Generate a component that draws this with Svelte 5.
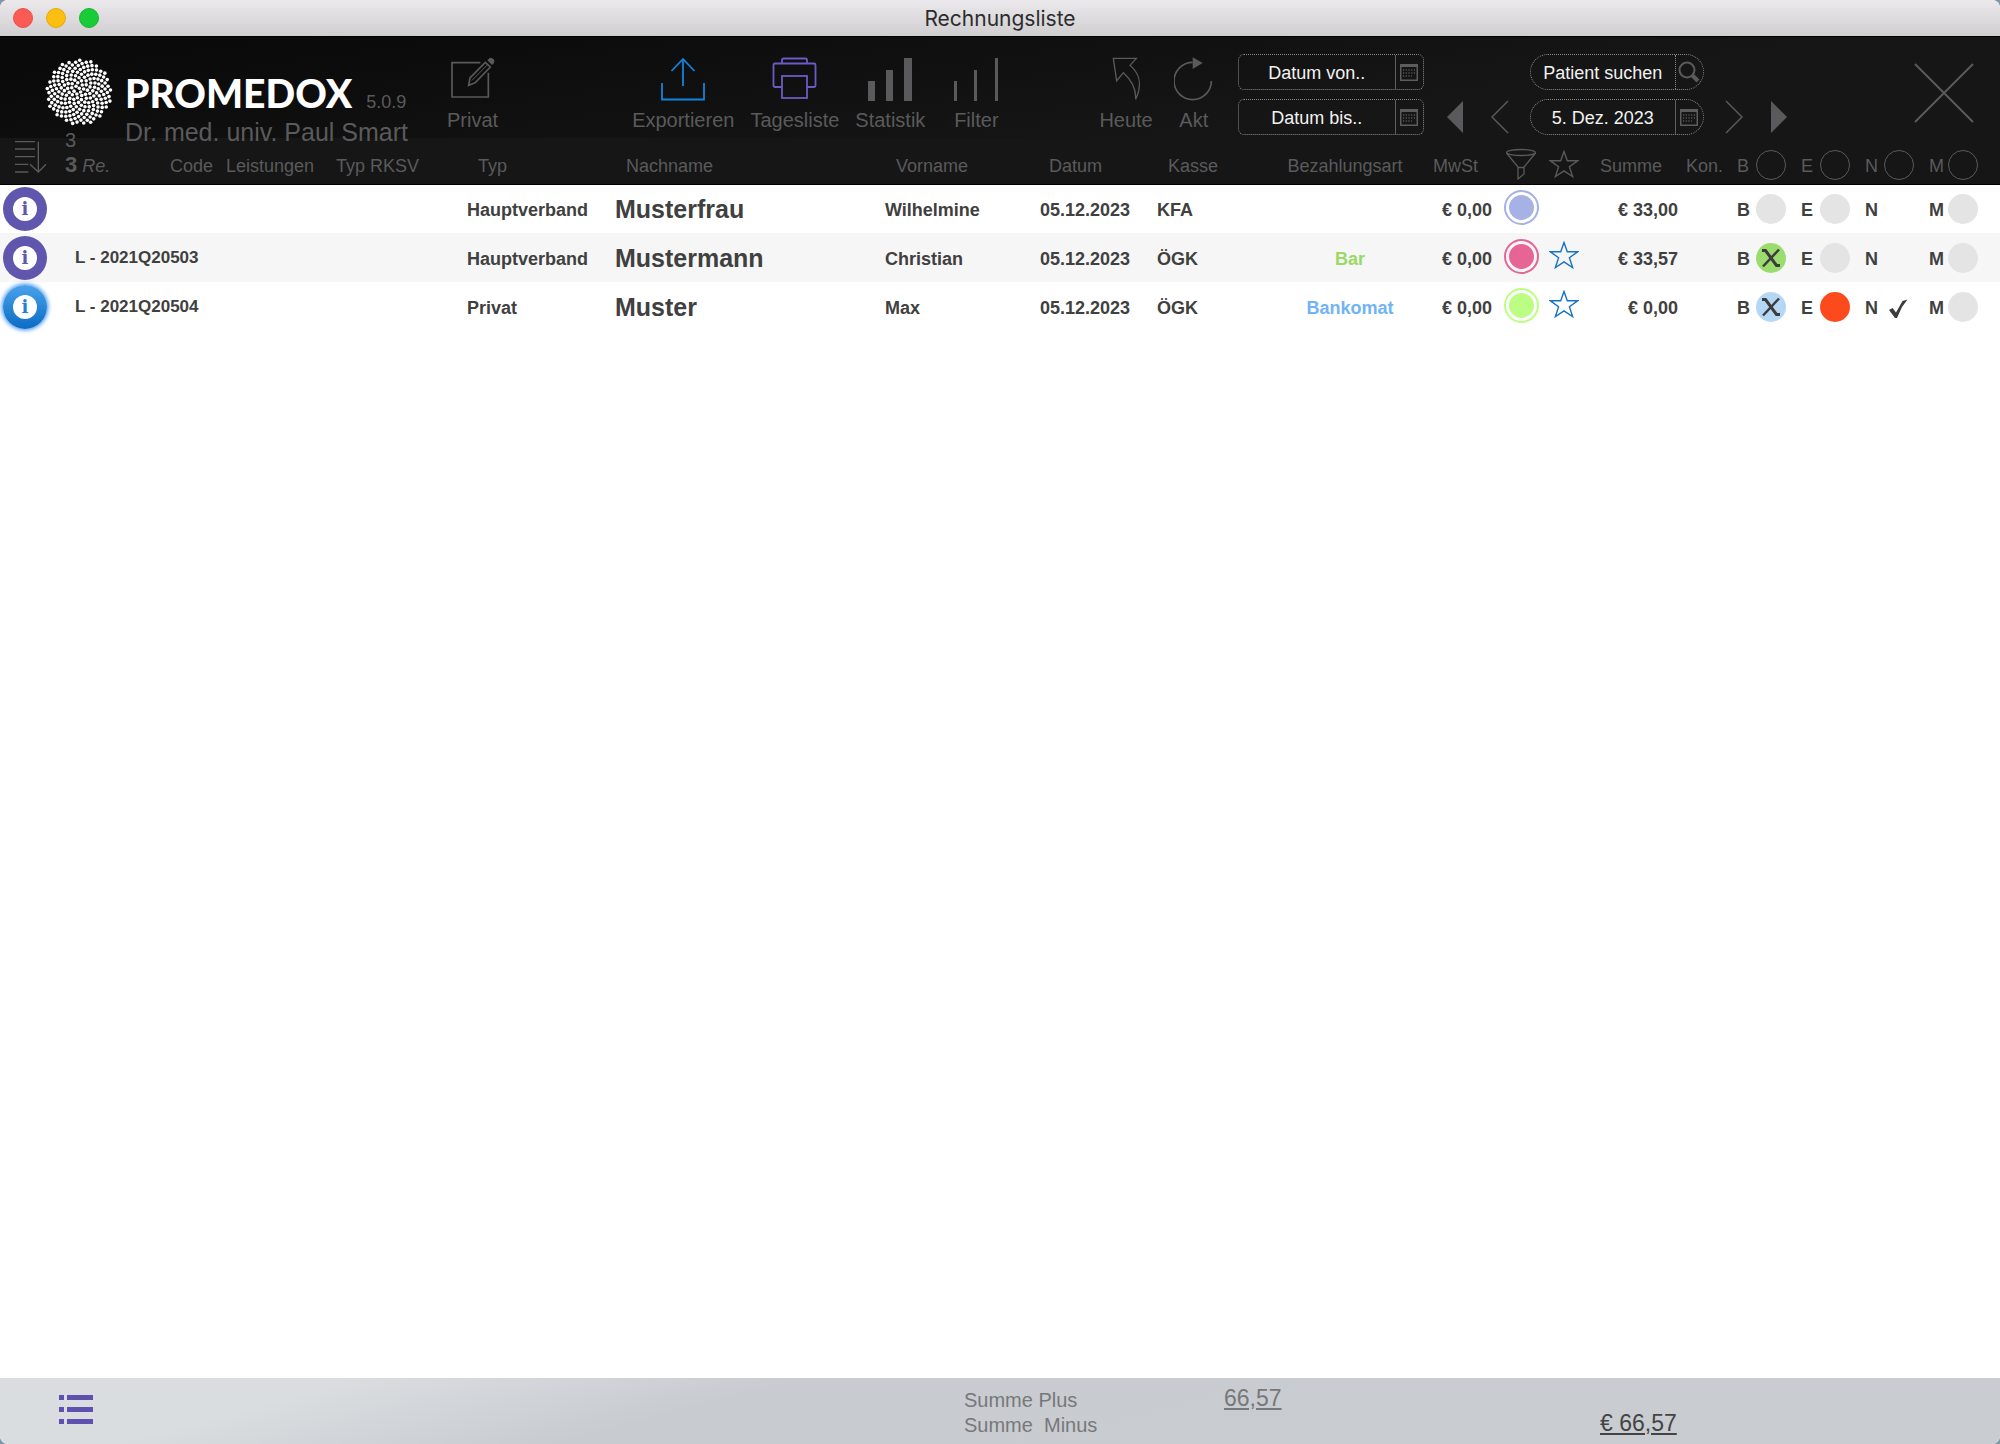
<script>
  let search = $state('');
  let dateFrom = $state('');
  let dateTo = $state('');
  let day = $state('5. Dez. 2023');

  // sunflower pattern for the logo
  const dots = Array.from({ length: 190 }, (_, i) => {
    const r = 2.36 * Math.sqrt(i + 0.5);
    const a = i * 2.39996;
    return { x: 34 + r * Math.cos(a), y: 34 + r * Math.sin(a) };
  });

  const flagNames = ['B', 'E', 'N', 'M'];

  let rows = $state([
    {
      nr: '', typ: 'Hauptverband', last: 'Musterfrau', first: 'Wilhelmine', date: '05.12.2023', kasse: 'KFA',
      pay: '', payClass: '', mwst: '€ 0,00', ring: 'blue', star: false, sum: '€ 33,00', active: false,
      flags: [{ color: 'grey' }, { color: 'grey' }, { color: 'none' }, { color: 'grey' }],
    },
    {
      nr: 'L - 2021Q20503', typ: 'Hauptverband', last: 'Mustermann', first: 'Christian', date: '05.12.2023', kasse: 'ÖGK',
      pay: 'Bar', payClass: 'bar', mwst: '€ 0,00', ring: 'pink', star: true, sum: '€ 33,57', active: false,
      flags: [{ color: 'green', mark: 'x' }, { color: 'grey' }, { color: 'none' }, { color: 'grey' }],
    },
    {
      nr: 'L - 2021Q20504', typ: 'Privat', last: 'Muster', first: 'Max', date: '05.12.2023', kasse: 'ÖGK',
      pay: 'Bankomat', payClass: 'bankomat', mwst: '€ 0,00', ring: 'lime', star: true, sum: '€ 0,00', active: true,
      flags: [{ color: 'sky', mark: 'x' }, { color: 'red' }, { color: 'none', mark: 'check' }, { color: 'grey' }],
    },
  ]);

  function select(row) {
    rows.forEach((r) => (r.active = false));
    row.active = true;
  }
</script>

{#snippet calendar()}
  <svg width="18" height="17" viewBox="0 0 18 17">
    <rect x="0.75" y="0.75" width="16.5" height="15.5" fill="none" stroke="#5c5c5e" stroke-width="1.5" />
    <rect x="0" y="0" width="18" height="3" fill="#5c5c5e" />
    <path d="M3 6H15M3 9H15M3 12H12" stroke="#77777a" stroke-width="1.2" stroke-dasharray="1.2 1.500" />
  </svg>
{/snippet}

{#snippet starIcon()}
  <svg width="30" height="30" viewBox="0 0 30 30" fill="none" stroke="currentColor" stroke-width="1.4">
    <path d="M15 1.5L18.3 10.8H28.6L20.4 16.8L23.6 26.6L15 20.8L6.4 26.6L9.6 16.8L1.4 10.8H11.7Z" />
  </svg>
{/snippet}

<div class="window">
  <div class="titlebar">
    <div class="lights">
      <button class="light close-light" aria-label="Schließen"></button>
      <button class="light min-light" aria-label="Minimieren"></button>
      <button class="light max-light" aria-label="Vergrößern"></button>
    </div>
    <h1>Rechnungsliste</h1>
  </div>

  <main>
    <header class="toolbar">
      <div class="brand">
        <div class="logo">
          <svg width="68" height="68" viewBox="0 0 68 68">
            {#each dots as d}
              <circle cx={d.x} cy={d.y} r="1.8" fill="#fff" />
            {/each}
          </svg>
          <span class="count">3</span>
        </div>
        <div class="brand-text">
          <div class="wordmark"><strong>PROMEDOX</strong><span class="version">5.0.9</span></div>
          <div class="doctor">Dr. med. univ. Paul Smart</div>
        </div>
      </div>

      <button class="tool">
        <svg width="46" height="45" viewBox="1353 168 138 135" fill="none" stroke="#5a5a5c" stroke-width="5">
          <path d="M1444 188H1359V291H1468V218" />
          <path d="M1409 256L1413 234L1459 187L1474 201L1429 248Z" />
          <path d="M1419 241L1466 194" stroke-width="3" />
          <path d="M1465 181L1472 174Q1478 172 1484 178Q1489 185 1485 189L1479 195Z" fill="#5a5a5c" stroke="none" />
        </svg>
        <span>Privat</span>
      </button>

      <div class="tools tools-main">
        <button class="tool">
          <svg width="44" height="45" viewBox="0 0 44 45" fill="none" stroke="#1283dc" stroke-width="1.8">
            <path d="M1 27V43.5H43V27M22 30V3M10.5 15L22 3L33.5 15" />
          </svg>
          <span>Exportieren</span>
        </button>
        <button class="tool">
          <svg width="45" height="45" viewBox="0 0 45 45" fill="none" stroke="#6a5cc4" stroke-width="1.8">
            <path d="M10 31H3Q1.5 31 1.5 29.5V9Q1.5 7.500 3 7.500H42Q43.500 7.500 43.500 9V29.500Q43.500 31 42 31H35" />
            <rect x="10" y="20" width="25" height="22" />
            <path d="M10 7.500V4Q10 2.500 11.500 2.500H33.500Q35 2.500 35 4V7.500" />
          </svg>
          <span>Tagesliste</span>
        </button>
        <button class="tool">
          <svg width="44" height="45" viewBox="0 0 44 45" fill="#5a5a5c">
            <path d="M0 25H7V45H0ZM18 14H25V45H18ZM36 2H44V45H36Z" />
          </svg>
          <span>Statistik</span>
        </button>
        <button class="tool filter">
          <svg width="44" height="45" viewBox="0 0 44 45" fill="#5a5a5c">
            <path d="M0 25H3V45H0ZM20 14H23V45H20ZM41 2H44V45H41Z" />
          </svg>
          <span>Filter</span>
        </button>
      </div>

      <div class="tools tools-nav">
        <button class="tool">
          <svg width="31" height="45" viewBox="150 168 93 135" fill="none" stroke="#5a5a5c" stroke-width="4">
            <path d="M157 175H226L207 196C235 220 246 250 224 298C226 262 206 235 187 218L167 243Z" />
          </svg>
          <span>Heute</span>
        </button>
        <button class="tool akt">
          <svg width="40" height="45" viewBox="334 168 120 135" fill="none" stroke="#5a5a5c" stroke-width="5">
            <path d="M446 243A56 56 0 1 1 390 187" />
            <path d="M390 172L420 189L390 207Z" fill="#5a5a5c" stroke="none" />
          </svg>
          <span>Akt</span>
        </button>
      </div>

      <div class="range">
        <div class="field">
          <input type="text" aria-label="Datum von" placeholder="Datum von.." bind:value={dateFrom} />
          <button class="field-btn" aria-label="Kalender öffnen">{@render calendar()}</button>
        </div>
        <div class="field">
          <input type="text" aria-label="Datum bis" placeholder="Datum bis.." bind:value={dateTo} />
          <button class="field-btn" aria-label="Kalender öffnen">{@render calendar()}</button>
        </div>
      </div>

      <div class="day-nav">
        <div class="steps">
          <button class="step" aria-label="Monat zurück">
            <svg width="18" height="34" viewBox="0 0 18 34"><path d="M17 1V33L1 17Z" fill="#5a5a5c" /></svg>
          </button>
          <button class="step" aria-label="Tag zurück">
            <svg width="18" height="34" viewBox="0 0 18 34"><path d="M17 1L1 17L17 33" fill="none" stroke="#5a5a5c" stroke-width="1.5" /></svg>
          </button>
        </div>
        <div class="pills">
          <div class="field pill">
            <input type="text" aria-label="Patient suchen" placeholder="Patient suchen" bind:value={search} />
            <button class="field-btn dotted" aria-label="Suchen">
              <svg width="22" height="22" viewBox="0 0 22 22" fill="none" stroke="#5a5a5c">
                <circle cx="9" cy="9" r="7.5" stroke-width="2" />
                <path d="M14 14L20 20" stroke-width="4" />
              </svg>
            </button>
          </div>
          <div class="field pill">
            <input type="text" aria-label="Tag" bind:value={day} />
            <button class="field-btn" aria-label="Kalender öffnen">{@render calendar()}</button>
          </div>
        </div>
        <div class="steps">
          <button class="step" aria-label="Tag vor">
            <svg width="18" height="34" viewBox="0 0 18 34"><path d="M1 1L17 17L1 33" fill="none" stroke="#5a5a5c" stroke-width="1.5" /></svg>
          </button>
          <button class="step" aria-label="Monat vor">
            <svg width="18" height="34" viewBox="0 0 18 34"><path d="M1 1V33L17 17Z" fill="#5a5a5c" /></svg>
          </button>
        </div>
      </div>

      <button class="close" aria-label="Liste schließen">
        <svg width="60" height="60" viewBox="0 0 60 60"><path d="M1 1L59 59M59 1L1 59" stroke="#5a5a5c" stroke-width="2" /></svg>
      </button>
    </header>

    <table>
      <colgroup>
        <col class="w-info" />
        <col class="w-count" />
        <col class="w-code" />
        <col class="w-leist" />
        <col class="w-rksv" />
        <col class="w-typ" />
        <col />
        <col class="w-first" />
        <col class="w-date" />
        <col class="w-kasse" />
        <col class="w-pay" />
        <col class="w-mwst" />
        <col class="w-ring" />
        <col class="w-star" />
        <col class="w-sum" />
        <col class="w-kon" />
        <col class="w-flag" />
        <col class="w-flag" />
        <col class="w-flag" />
        <col class="w-last" />
      </colgroup>
      <thead>
        <tr>
          <th class="icon-head sort">
            <button class="plain" aria-label="Sortieren">
              <svg width="33" height="34" viewBox="42 416 99 102" fill="none" stroke="#5a5a5c" stroke-width="4">
                <path d="M45 421H105M45 443H105M45 466H105M45 489H85M45 512H85M115 421V511M90 489L115 512L138 489" />
              </svg>
            </button>
          </th>
          <th class="total"><b>3</b> <i>Re.</i></th>
          <th>Code</th>
          <th>Leistungen</th>
          <th>Typ RKSV</th>
          <th class="indent">Typ</th>
          <th class="indent">Nachname</th>
          <th class="indent">Vorname</th>
          <th class="date">Datum</th>
          <th class="indent">Kasse</th>
          <th class="center pay">Bezahlungsart</th>
          <th class="mwst">MwSt</th>
          <th class="icon-head center">
            <button class="plain" aria-label="Markierung filtern">
              <svg width="32" height="32" viewBox="0 0 32 32" fill="none" stroke="#5a5a5c" stroke-width="1.3">
                <ellipse cx="16" cy="4.500" rx="14.500" ry="3" />
                <path d="M1.500 5L13 19V31L19 26V19L30.500 5M13 19.500H19" />
              </svg>
            </button>
          </th>
          <th class="icon-head center">
            <button class="plain" aria-label="Favoriten filtern">{@render starIcon()}</button>
          </th>
          <th class="sum">Summe</th>
          <th class="kon">Kon.</th>
          {#each flagNames as name}
            <th class="icon-head flag-cell">
              <label class="flag"><span>{name}</span><input type="checkbox" class="outline" /></label>
            </th>
          {/each}
        </tr>
      </thead>
      <tbody>
        {#each rows as row}
          <tr>
            <td class="info-cell">
              <button class="info" class:active={row.active} aria-label="Info" onclick={() => select(row)}><span>i</span></button>
            </td>
            <td class="nr" colspan="4">{row.nr}</td>
            <td class="text">{row.typ}</td>
            <td class="name">{row.last}</td>
            <td class="text">{row.first}</td>
            <td class="text">{row.date}</td>
            <td class="text">{row.kasse}</td>
            <td class="text center pay {row.payClass}">{row.pay}</td>
            <td class="text mwst">{row.mwst}</td>
            <td class="icon center"><span class="ring {row.ring}"></span></td>
            <td class="icon center star">
              {#if row.star}
                <button class="plain" aria-label="Favorit">{@render starIcon()}</button>
              {/if}
            </td>
            <td class="text sum">{row.sum}</td>
            <td></td>
            {#each row.flags as flag, i}
              <td class="flag-cell">
                <label class="flag">
                  <span>{flagNames[i]}</span>
                  <input type="checkbox" class={flag.color} checked={!!flag.mark} />
                  {#if flag.mark === 'x'}
                    <svg class="mark" width="30" height="30" viewBox="0 0 30 30" fill="none" stroke="#3c3c3c">
                      <path d="M6 7.500H9.500L20.500 22.500H24" stroke-width="3" />
                      <path d="M23 6.500L7 23.500" stroke-width="2.500" />
                    </svg>
                  {:else if flag.mark === 'check'}
                    <svg class="mark" width="30" height="30" viewBox="0 0 30 30">
                      <path d="M5 18L8.500 16L12 20.500L18.500 9L23.500 7.500L18 15L13 26H11Z" fill="#3c3c3c" />
                    </svg>
                  {/if}
                </label>
              </td>
            {/each}
          </tr>
        {/each}
      </tbody>
    </table>
  </main>

  <footer>
    <button class="plain list-btn" aria-label="Listenansicht">
      <svg width="34" height="30" viewBox="0 0 34 30" fill="#5d50ae">
        <path d="M0 0H5V5H0ZM8 0H34V5H8ZM0 12H5V17H0ZM8 12H34V17H8ZM0 24H5V29H0ZM8 24H34V29H8Z" />
      </svg>
    </button>
    <div class="sum-labels">
      <div>Summe Plus</div>
      <div>Summe&nbsp; Minus</div>
    </div>
    <div class="plus">66,57</div>
    <div class="grand">€ 66,57</div>
  </footer>
</div>

<style>
  :global(body) {
    background: #7f97a6;
  }

  .window {
    display: flex;
    flex-direction: column;
    min-height: 100vh;
    border-radius: 8px;
    overflow: hidden;
    background: #fff;
    font-family: "Liberation Sans", Arial, sans-serif;
    font-size: 18px;
    line-height: 22px;
    color: #404040;
  }

  button {
    padding: 0;
    border: none;
    background: none;
    font: inherit;
    color: inherit;
    cursor: pointer;
  }

  svg {
    display: block;
  }

  .titlebar {
    display: grid;
    grid-template-columns: 1fr auto 1fr;
    align-items: center;
    height: 36px;
    background: linear-gradient(#ebe9eb, #d0ced0);
    border-bottom: 1px solid #000;
  }

  .lights {
    display: flex;
    gap: 13px;
    padding-left: 13px;
  }

  .light {
    width: 20px;
    height: 20px;
    border-radius: 50%;
  }

  .close-light {
    background: #fc5b55;
    border: 1px solid #e5504a;
  }

  .min-light {
    background: #fdbf0f;
    border: 1px solid #e3a90f;
  }

  .max-light {
    background: #18cc38;
    border: 1px solid #18b432;
  }

  h1 {
    margin: 0;
    padding-top: 2px;
    font-family: Inter, sans-serif;
    font-size: 21px;
    font-weight: 400;
    color: #2c2c2c;
  }

  main {
    flex: 1;
  }

  .toolbar {
    position: relative;
    display: flex;
    align-items: flex-start;
    box-sizing: border-box;
    height: 101px;
    background: linear-gradient(172deg, #0a0a0a 10%, #161616 70%);
    color: #5a5a5c;
  }

  .brand {
    display: flex;
    gap: 12px;
    width: 402px;
    padding: 21px 0 0 45px;
  }

  .logo {
    display: flex;
    flex-direction: column;
    gap: 3px;
  }

  .count {
    padding-left: 20px;
    font-size: 20px;
  }

  .brand-text {
    padding-top: 15px;
    white-space: nowrap;
  }

  .wordmark {
    display: flex;
    align-items: baseline;
    gap: 14px;
    line-height: 40px;
  }

  .wordmark strong {
    font-family: Lato, sans-serif;
    font-size: 39px;
    font-weight: 900;
    color: #fff;
  }

  .doctor {
    font-size: 25px;
    line-height: 20px;
  }

  .tool {
    display: flex;
    flex-direction: column;
    align-items: center;
    gap: 8px;
    padding-top: 19px;
    font-size: 20px;
  }

  .tools {
    display: flex;
    gap: 16px;
  }

  .tools-main {
    margin-left: 134px;
  }

  .tools-nav {
    margin-left: 88px;
  }

  .filter {
    min-width: 70px;
  }

  .akt {
    min-width: 50px;
  }

  .range,
  .pills {
    display: flex;
    flex-direction: column;
    gap: 9px;
  }

  .range {
    margin: 17px 0 0 19px;
  }

  .field {
    display: flex;
    box-sizing: border-box;
    width: 186px;
    height: 36px;
    border: 1px dotted #8a8a8a;
    border-radius: 6px;
  }

  .pill {
    width: 174px;
    border-radius: 18px;
  }

  .field input {
    flex: 1;
    min-width: 0;
    padding: 2px 0 0;
    border: none;
    outline: none;
    background: none;
    font: inherit;
    color: #f2f2f2;
    text-align: center;
  }

  .field input::placeholder {
    color: #f2f2f2;
    opacity: 1;
  }

  .field-btn {
    display: flex;
    align-items: center;
    justify-content: center;
    width: 28px;
    border-left: 1px solid #5f5f5f;
  }

  .field-btn.dotted {
    border-left: 1px dotted #8a8a8a;
  }

  .day-nav {
    display: flex;
    align-items: flex-end;
    gap: 21px;
    margin: 17px 0 0 22px;
  }

  .steps {
    display: flex;
    gap: 27px;
  }

  .step {
    padding-bottom: 1px;
  }

  .close {
    margin: 26px 26px 0 auto;
  }

  table {
    width: 100%;
    table-layout: fixed;
    border-collapse: collapse;
  }

  .w-info { width: 60px; }
  .w-count { width: 110px; }
  .w-code { width: 56px; }
  .w-leist { width: 110px; }
  .w-rksv { width: 131px; }
  .w-typ { width: 148px; }
  .w-first { width: 155px; }
  .w-date { width: 117px; }
  .w-kasse { width: 123px; }
  .w-pay { width: 134px; }
  .w-mwst { width: 84px; }
  .w-ring { width: 46px; }
  .w-star { width: 40px; }
  .w-sum { width: 94px; }
  .w-kon { width: 53px; }
  .w-flag { width: 64px; }
  .w-last { width: 77px; }

  th,
  td {
    box-sizing: border-box;
    padding: 0;
    text-align: left;
    white-space: nowrap;
  }

  thead {
    background: #161616;
    color: #5a5a5c;
  }

  th {
    height: 46px;
    padding-bottom: 7px;
    vertical-align: bottom;
    font-weight: 400;
    border-bottom: 1px solid #000;
  }

  .icon-head {
    padding-bottom: 4px;
  }

  .plain {
    display: inline-block;
    vertical-align: bottom;
  }

  .sort {
    padding-left: 14px;
    padding-bottom: 10px;
  }

  .total {
    padding-left: 5px;
  }

  .total b {
    font-size: 22px;
  }

  .indent {
    padding-left: 11px;
  }

  .date {
    padding-left: 9px;
  }

  .center {
    text-align: center;
  }

  th.pay {
    padding-right: 4px;
  }

  th.mwst {
    text-align: right;
    padding-right: 20px;
  }

  th.sum {
    text-align: right;
    padding-right: 16px;
  }

  .kon {
    padding-left: 8px;
  }

  td {
    height: 49px;
    font-weight: 700;
  }

  tbody tr:nth-child(even) {
    background: #f6f6f6;
  }

  .text {
    padding-top: 2px;
  }

  .icon {
    padding-bottom: 3px;
  }

  td.pay {
    padding-left: 6px;
  }

  td.mwst {
    text-align: right;
    padding-right: 6px;
  }

  td.sum {
    text-align: right;
  }

  .info-cell {
    padding-left: 3px;
  }

  .info {
    display: flex;
    align-items: center;
    justify-content: center;
    width: 44px;
    height: 44px;
    border-radius: 50%;
    background: #6156ae;
    color: #6156ae;
  }

  .info span {
    width: 24px;
    height: 24px;
    border-radius: 50%;
    background: #fff;
    font-family: "DejaVu Serif", serif;
    font-size: 18px;
    font-weight: 700;
    line-height: 24px;
    text-align: center;
  }

  .info.active {
    background: linear-gradient(#4aa2ea, #0b6cc3);
    box-shadow: 0 0 4px 1px #2f8df5;
    color: #1f80d4;
  }

  .nr {
    padding-left: 15px;
    font-size: 17px;
  }

  .name {
    font-size: 25px;
  }

  .bar {
    color: #9bd966;
  }

  .bankomat {
    color: #70b4f6;
  }

  .ring {
    display: inline-block;
    box-sizing: border-box;
    width: 35px;
    height: 35px;
    padding: 3px;
    border: 2px solid;
    border-radius: 50%;
    background: currentColor content-box;
    vertical-align: middle;
  }

  .ring.blue { color: #a6b1e6; }
  .ring.pink { color: #e66595; }
  .ring.lime { color: #bcfd84; }

  .star {
    color: #1673c4;
  }

  .star .plain {
    vertical-align: middle;
  }

  .flag-cell {
    padding-left: 6px;
  }

  .flag {
    display: grid;
    grid-template-columns: 19px 30px;
    align-items: center;
  }

  .flag input {
    grid-area: 1 / 2;
    appearance: none;
    width: 30px;
    height: 30px;
    margin: 0;
    border-radius: 50%;
  }

  .flag span {
    padding-top: 2px;
  }

  .mark {
    grid-area: 1 / 2;
    position: relative;
    pointer-events: none;
  }

  .outline { border: 1px solid #5a5a5c; }
  .grey { background: #e4e4e4; }
  .green { background: #9bdc6e; }
  .sky { background: #b5d7f6; }
  .red { background: #fd4a1c; }
  .none { background: transparent; }

  footer {
    display: grid;
    grid-template-columns: 964fr 260fr 376fr 400fr;
    box-sizing: border-box;
    height: 66px;
    padding-top: 8px;
    background: linear-gradient(165deg, #d9dde0 16%, #c8cbd0 36%, #c9ccd0);
    color: #77787a;
    font-size: 20px;
    line-height: 25px;
  }

  .list-btn {
    place-self: start;
    padding: 9px 59px;
  }

  .sum-labels {
    padding-top: 2px;
  }

  .plus,
  .grand {
    font-size: 23px;
    text-decoration: underline;
  }

  .grand {
    padding-top: 25px;
    color: #444;
  }
</style>
